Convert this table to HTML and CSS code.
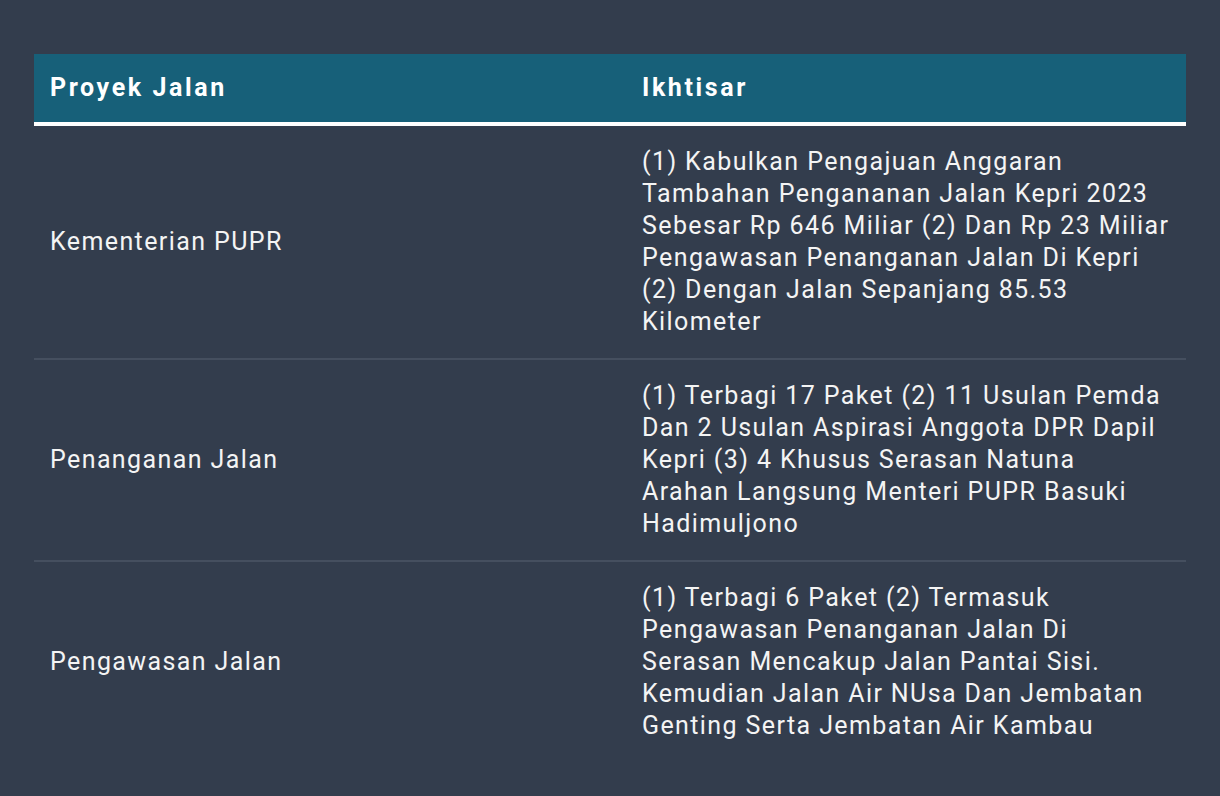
FILE: index.html
```html
<!DOCTYPE html>
<html lang="id">
<head>
<meta charset="utf-8">
<title>Proyek Jalan</title>
<link rel="stylesheet" href="styles.css">
</head>
<body>
<div class="page">
  <div class="table">
    <div class="row head">
      <div class="cell">Proyek Jalan</div>
      <div class="cell">Ikhtisar</div>
    </div>
    <div class="row body">
      <div class="cell name">Kementerian PUPR</div>
      <div class="cell">(1) Kabulkan Pengajuan Anggaran Tambahan Pengananan Jalan Kepri 2023 Sebesar Rp 646 Miliar (2) Dan Rp 23 Miliar Pengawasan Penanganan Jalan Di Kepri (2) Dengan Jalan Sepanjang 85.53 Kilometer</div>
    </div>
    <div class="row body">
      <div class="cell name">Penanganan Jalan</div>
      <div class="cell">(1) Terbagi 17 Paket (2) 11 Usulan Pemda Dan 2 Usulan Aspirasi Anggota DPR Dapil Kepri (3) 4 Khusus Serasan Natuna Arahan Langsung Menteri PUPR Basuki Hadimuljono</div>
    </div>
    <div class="row body last">
      <div class="cell name">Pengawasan Jalan</div>
      <div class="cell">(1) Terbagi 6 Paket (2) Termasuk Pengawasan Penanganan Jalan Di Serasan Mencakup Jalan Pantai Sisi. Kemudian Jalan Air NUsa Dan Jembatan Genting Serta Jembatan Air Kambau</div>
    </div>
  </div>
</div>
</body>
</html>
```

FILE: styles.css
```css
html, body {
  margin: 0;
  padding: 0;
  background: #333d4d;
}
body {
  font-family: Roboto, "Liberation Sans", sans-serif;
  color: #f4f4f4;
}
.page {
  padding: 54px 34px 0 34px;
}
.table {
  display: flex;
  flex-direction: column;
}
.row {
  display: grid;
  grid-template-columns: 592px 1fr;
}
.cell {
  padding: 0 16px;
  font-size: 25px;
  line-height: 32px;
  letter-spacing: 1.4px;
}
.head {
  background: #176079;
  border-bottom: 4px solid #ffffff;
}
.head .cell {
  font-weight: 700;
  letter-spacing: 2.6px;
  padding-top: 18px;
  padding-bottom: 18px;
  color: #ffffff;
}
.body {
  border-bottom: 2px solid #454f5f;
}
.body.last {
  border-bottom: none;
}
.body .cell {
  padding-top: 20px;
  padding-bottom: 20px;
}
.body .name {
  display: flex;
  align-items: center;
}
```
